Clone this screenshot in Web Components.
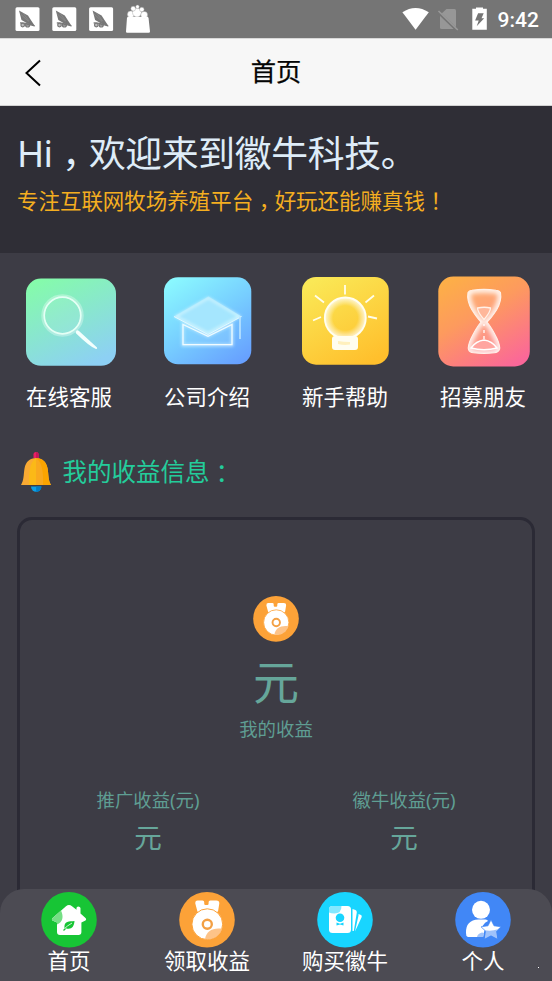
<!DOCTYPE html>
<html lang="zh-CN">
<head>
<meta charset="utf-8">
<title>首页</title>
<style>
html,body{margin:0;height:100%;overflow:hidden;background:#3d3c45;font-family:"Noto Sans","Noto Sans CJK SC",sans-serif}
</style>
</head>
<body>
<farm-app></farm-app>
<script>
const define = (name, html) => {
  const t = document.createElement('template');
  t.innerHTML = html;
  customElements.define(name, class extends HTMLElement {
    constructor() {
      super();
      this.attachShadow({mode: 'open'}).appendChild(t.content.cloneNode(true));
    }
  });
};

define('status-bar', `<style>
:host{display:flex;box-sizing:border-box;height:38px;background:#757575;align-items:stretch;justify-content:space-between;color:#fff}
svg{display:block}
.right{display:flex}
time{font:500 21px/38px Roboto,sans-serif;width:54.500px;padding-top:1px}
</style>
<svg width="170" height="38" viewBox="0 0 170 38">
  <defs><g id="app"><rect x="15.500" y="7.300" width="24" height="23.700" rx="1.500" fill="#fff"/>
    <path d="M19 10.500l9 5 3.200 5 4 6-8-3.200-5.700-3.300z" fill="#777"/>
    <path d="M20.500 14l8 7.500M23 13l6 8" stroke="#999" stroke-width=".5"/>
    <g fill="#bbb" stroke="#777" stroke-width="1.200"><circle cx="22.700" cy="25" r="1.800"/><circle cx="27.600" cy="25" r="2"/><path d="M20 22.800l6 .5 8.500 2.500M25 25h7"/></g></g></defs>
  <use href="#app"/><use href="#app" x="36.800"/><use href="#app" x="73.600"/>
  <g fill="#fff"><path d="M127 17.500h21.500l1.500 14q0 1.300-1.300 1.300h-21.500q-1.300 0-1.200-1.300z"/>
  <g stroke="#999" stroke-width=".4"><circle cx="130.800" cy="14.300" r="3.400"/><circle cx="137" cy="12.500" r="4.500"/><circle cx="144.200" cy="14.800" r="3.400"/><circle cx="133.200" cy="8.700" r="2.400"/><circle cx="137.500" cy="6.800" r="1.800"/><circle cx="141.800" cy="9.500" r="2.300"/></g><path d="M127.500 16.800h20.500v2h-20.500z"/></g>
</svg>
<div class="right"><svg width="96" height="38" viewBox="402 0 96 38">
  <path d="M402.400 12.300Q415.500 3.600 428.800 12.300L415.600 29.800z" fill="#fff"/>
  <path d="M446.500 9h8q1.500 0 1.500 1.500V29h-14.500q-1.500 0-1.500-1.500V15z" fill="#979797"/>
  <path d="M438.500 12.300L457.300 30.500" stroke="#757575" stroke-width="3"/><path d="M438.500 11L457.800 30" stroke="#999" stroke-width="1.600"/>
  <path d="M476 8.800v-1.300h7v1.300h3.800v21h-14.500v-21z" fill="#fff"/>
  <path d="M478.100 13.200h5.600l-2.200 5h2.700l-7.500 8 2-5.700h-3.600z" fill="#757575"/>
</svg><time>9:42</time></div>`);

define('nav-header', `<style>
:host{display:grid;grid-template-columns:60px 1fr 60px;align-items:center;box-sizing:border-box;height:68px;background:#f7f7f7;border-top:1px solid #d8d8d8;border-bottom:1px solid #d2d2d2;color:#050505}
h1{margin:0;font-size:25.3px;font-weight:400;line-height:60px;text-align:center;padding-bottom:2px;-webkit-text-stroke:.25px}
svg{display:block}
</style>
<svg width="60" height="66" viewBox="0 39 60 66"><path d="M40 60.500L26.500 73 40 85.500" fill="none" stroke="#000" stroke-width="2"/></svg>
<h1><slot></slot></h1>`);

define('welcome-banner', `<style>
:host{display:block;box-sizing:border-box;height:147px;padding:22px 17px 0;background:#2f2e36;white-space:nowrap}
.t{height:50px;font-size:36.8px;line-height:50px;color:#deecf8;letter-spacing:-.3px}
.h{letter-spacing:-.7px}
.s{height:30px;font-size:21.47px;line-height:30px;margin-top:8px;color:#f5ae20}
i{font-style:normal;font-family:"Noto Sans CJK TC",sans-serif;position:relative;line-height:0}
.t .c{top:11px}
.s .c{top:6px}
</style>
<div class="t"><span class="h">Hi</span><i class="c" lang="zh-TW">，</i>欢迎来到徽牛科技。</div>
<div class="s">专注互联网牧场养殖平台<i class="c" lang="zh-TW">，</i>好玩还能赚真钱<i lang="zh-TW">！</i></div>`);

define('icon-link', `<style>
:host{display:flex;flex-direction:column;align-items:center;color:#fff}
::slotted(svg){display:block;overflow:visible;width:92px;height:92px}
span{font-size:21.47px;line-height:30px;margin-top:15px;white-space:nowrap}
</style><slot name="icon"></slot><span><slot></slot></span>`);

define('section-title', `<style>
:host{display:flex;height:44px;padding-left:17px;color:#24cc9b;font-size:24.53px;line-height:45px}
svg{display:block;width:45.5px;height:44px}
i{font-style:normal;font-family:"Noto Sans CJK TC",sans-serif;padding-top:1px}
</style>
<svg viewBox="17 449 45.5 44"><path d="M33.5 458v-3.5a2.6 2.6 0 015.2 0V458" fill="#e91e63"/><path d="M36 452a2.6 2.6 0 012.7 2.5V458H36z" fill="#c2185b"/>
<path d="M31 486.500a5.200 5.200 0 0010.400 0z" fill="#0aa0e8"/><path d="M36.100 486.500v5.300a5.200 5.200 0 005.300-5.300z" fill="#027cc4"/>
<path d="M21 485c3-5 2.500-10 3.500-16.500C25.800 461.500 30 458 36 458s10.400 3.500 11.600 10.500C48.700 475 48 480 51 485z" fill="#f9aa33"/>
<path d="M36 458c6 0 10.400 3.500 11.600 10.500C48.700 475 48 480 51 485H36z" fill="#fba400"/>
<path d="M29 485c-.5-13 1-23 7-27v27z" fill="#fbb917"/><path d="M36 485v-27c6 4 7.500 14 7 27z" fill="#f9a91e"/></svg>
<slot></slot><i lang="zh-TW">：</i>`);

define('stat-item', `<style>
:host{display:flex;flex-direction:column;align-items:center;color:#66a69a;white-space:nowrap}
.l{font-size:18.4px;line-height:26px;color:#5f9e93}
.v{font-size:27.6px;line-height:40px;margin-top:4px}
</style><div class="l"><slot></slot></div><div class="v"><slot name="value"></slot></div>`);

define('income-card', `<style>
:host{display:block;box-sizing:border-box;height:420px;margin:24px 17px 0;border:3px solid #2b2a35;border-radius:15px;padding-top:76px;color:#66a69a}
.sum{display:flex;flex-direction:column;align-items:center}
.big{font-size:46px;line-height:60px;margin-top:9px}
.lab{font-size:18.4px;line-height:26px;margin-top:5px;color:#5f9e93}
.row{display:grid;grid-template-columns:1fr 1fr;margin-top:45px}
</style>
<div class="sum"><medal-icon style="--s:46px"></medal-icon><div class="big">元</div><div class="lab">我的收益</div></div>
<div class="row"><stat-item>推广收益(元)<span slot="value">元</span></stat-item><stat-item>徽牛收益(元)<span slot="value">元</span></stat-item></div>`);

define('medal-icon', `<style>:host{display:block;width:var(--s,56px);height:var(--s,56px)}svg{display:block;width:100%;height:100%}</style>
<svg viewBox="179 892 56 56"><circle cx="207" cy="919.800" r="27.800" fill="#fca238"/>
<path d="M197.500 900.500h5q1.700 0 1.700 1.500v1.500q0 1.600 1.300 1.600h1.800q1.300 0 1.300-1.600V902q0-1.500 1.700-1.500h6q3.200 0 3 3l-1.200 7.500q-.5 1.500-2.200 1H199.500q-1.700.5-2.200-1l-2-7.500q-.2-3 2.200-3z" fill="#fff"/>
<circle cx="207.300" cy="924.200" r="15.400" fill="#fff" stroke="#fca238"/>
<path d="M205 939.200c1-8 8-12 17-10.500-2 7-9 11.500-17 10.500z" fill="#fdc388"/>
<circle cx="207.300" cy="924.200" r="4.500" fill="none" stroke="#f3a044" stroke-width="2.400"/></svg>`);

define('tab-item', `<style>
:host{display:flex;flex-direction:column;align-items:center;color:#fff}
::slotted(svg){display:block;width:56px;height:56px}
span{font-size:21.47px;line-height:30px;margin-top:-2px;white-space:nowrap}
</style><slot name="icon"></slot><span><slot></slot></span>`);

define('tab-bar', `<style>
:host{display:grid;grid-template-columns:repeat(4,1fr);box-sizing:border-box;height:92px;padding-top:3px;background:#4c4b53;border-radius:24px 24px 0 0}
</style><slot></slot>`);

define('farm-app', `<style>
:host{display:flex;flex-direction:column;width:552px;height:981px;position:relative;overflow:hidden;background:#3d3c45}
.links{display:grid;grid-template-columns:repeat(4,1fr);padding-top:22px}
section-title{margin-top:37px}
status-bar,nav-header,welcome-banner,.links,section-title,income-card{flex-shrink:0}
tab-bar{position:absolute;left:0;right:0;bottom:0}
.dot{position:absolute;left:538px;top:967px;width:1px;height:1px;background:#fff}
</style>
<status-bar></status-bar>
<nav-header>首页</nav-header>
<welcome-banner></welcome-banner>
<div class="links">
<icon-link><svg slot="icon" viewBox="23 275 92 92">
 <defs><linearGradient id="a" x1=".2" y1="0" x2=".7" y2="1"><stop offset="0" stop-color="#85fbab"/><stop offset="1" stop-color="#8dd0f4"/></linearGradient></defs>
 <rect x="26" y="278.500" width="90" height="87.300" rx="15" fill="url(#a)"/>
 <circle cx="62.500" cy="315.500" r="19.500" fill="none" stroke="#fff" stroke-opacity=".32" stroke-width="3.500"/>
 <circle cx="62.500" cy="315.500" r="18.300" fill="#fff" fill-opacity=".08" stroke="#e4fff5" stroke-width="1.700"/>
 <path d="M76 331.500q1-2 3-.6L97 347.500q.7 1.500-1 1.600-7-3-19.800-15.600-.8-1-.2-2z" fill="#f3fffd"/></svg>在线客服</icon-link>
<icon-link><svg slot="icon" viewBox="161 275 92 92">
 <defs><linearGradient id="b" x1=".15" y1="0" x2=".85" y2="1"><stop offset="0" stop-color="#8af8ff"/><stop offset=".5" stop-color="#77ceff"/><stop offset="1" stop-color="#67a0ff"/></linearGradient>
 <filter id="bf" x="-20%" y="-20%" width="140%" height="140%"><feGaussianBlur stdDeviation="1.400"/></filter></defs>
 <rect x="164" y="277.300" width="87.300" height="87" rx="14" fill="url(#b)"/>
 <path d="M183 324l25 12 24-12v21h-49z" fill="none" stroke="#d9f5ff" stroke-width="3" filter="url(#bf)" opacity=".7"/>
 <path d="M183 324.500l25 11.800 24-11.800v20.200h-49z" fill="#9ad9ff" fill-opacity=".3" stroke="#f2fcff" stroke-width="1.300"/>
 <path d="M208.500 296.500l33 20-33.500 18-34-18z" fill="#a5e6fe"/>
 <path d="M208.500 298l31 18.500-31.500 17-32-17z" fill="none" stroke="#d5f6ff" stroke-width="2" filter="url(#bf)"/>
 <path d="M174 316.500l34 18 33.500-18" fill="none" stroke="#e2f9ff" stroke-width="1"/><path d="M240 317v22" stroke="#b8e2ff" stroke-width="1.700"/></svg>公司介绍</icon-link>
<icon-link><svg slot="icon" viewBox="299 275 92 92">
 <defs><linearGradient id="c" x1=".2" y1="0" x2=".75" y2="1"><stop offset="0" stop-color="#fae856"/><stop offset="1" stop-color="#ffbf2c"/></linearGradient>
 <radialGradient id="cg"><stop offset=".6" stop-color="#fff" stop-opacity="0"/><stop offset="1" stop-color="#fff" stop-opacity=".8"/></radialGradient></defs>
 <rect x="302" y="277" width="86.800" height="87.700" rx="14" fill="url(#c)"/>
 <circle cx="345.300" cy="318" r="20.500" fill="url(#cg)" stroke="#fffef0" stroke-width="1.800"/>
 <rect x="332" y="336" width="26" height="14" rx="3" fill="#fffdf0"/><path d="M338 341q5 1 12 1v2.500q-6 1-12-.5z" fill="#fff0bd"/>
 <g stroke="#fffdeb" stroke-width="1.800"><path d="M345 285v9.500M315 295.500l9 7M374 295.500l-8.500 7M313 320.500l8-3.500M368 316.500l9 2"/></g></svg>新手帮助</icon-link>
<icon-link><svg slot="icon" viewBox="437 275 92 92">
 <defs><linearGradient id="d" x1=".2" y1="0" x2=".8" y2="1"><stop offset="0" stop-color="#fdae48"/><stop offset=".4" stop-color="#fd9a5e"/><stop offset="1" stop-color="#fb6799"/></linearGradient>
 <filter id="df" x="-20%" y="-20%" width="140%" height="140%"><feGaussianBlur stdDeviation="2.500"/></filter>
 <clipPath id="dc"><path d="M468 292.500q1-2 4-2.200 12-1.800 24 0 3.500.4 4.500 2.200 1.500 8-4 17.500-5.500 8.500-9.500 12 5 6 10 16.500 3.500 8 2.500 11-1.500 3-5 3.300-11 1.300-21 0-4-.3-5-3.300-1-3 2.500-11 5-10.500 10-16.500-4-4-9-12-5.500-9.500-4-17.500z"/></clipPath></defs>
 <rect x="438.300" y="276.500" width="91.500" height="90" rx="15" fill="url(#d)"/>
 <g clip-path="url(#dc)"><path d="M468 292.500q1-2 4-2.200 12-1.800 24 0 3.500.4 4.500 2.200 1.500 8-4 17.500-5.500 8.500-9.500 12 5 6 10 16.500 3.500 8 2.500 11-1.500 3-5 3.300-11 1.300-21 0-4-.3-5-3.300-1-3 2.500-11 5-10.500 10-16.500-4-4-9-12-5.500-9.500-4-17.500z" fill="#ffb8a2" fill-opacity=".35" stroke="#fff" stroke-width="5.500" filter="url(#df)"/></g>
 <path d="M468 292.500q1-2 4-2.200 12-1.800 24 0 3.500.4 4.500 2.200 1.500 8-4 17.500-5.500 8.500-9.500 12 5 6 10 16.500 3.500 8 2.500 11-1.500 3-5 3.300-11 1.300-21 0-4-.3-5-3.300-1-3 2.500-11 5-10.500 10-16.500-4-4-9-12-5.500-9.500-4-17.500z" fill="none" stroke="#fff0e8" stroke-width="1.100" stroke-linejoin="round"/>
 <path d="M477.500 308q7-1.500 13 0 0 4-6.500 11.500-6.500-7.500-6.500-11.500z" fill="#ffb79a" stroke="#fff1e8" stroke-width="1.300"/>
 <path d="M484 324v2m0 4v3m0 3v3" stroke="#fff" stroke-width="1.300"/><path d="M471 348q5-7 13-8 8 1 13 8-13 3.500-26 0z" fill="#ffa5a0" stroke="#fff" stroke-width="1.300"/></svg>招募朋友</icon-link>
</div>
<section-title>我的收益信息</section-title>
<income-card></income-card>
<tab-bar>
<tab-item><svg slot="icon" viewBox="41 892 56 56"><circle cx="69" cy="919.800" r="27.800" fill="#17c535"/>
 <path d="M69 905q1.500 0 3 1.300l4.500 3.400V908q0-1.500 1.800-1.500t2.200 1.500v5.500l5 4.500q1.500 1.700-.5 2.800l-3.600 1.700V932q0 3-3 3H60q-3 0-3-3v-9.500l-4-1.700q-2-1-.4-2.800L66 906.300q1.500-1.300 3-1.300z" fill="#fff"/>
 <path d="M61 910.500q4.500 10-4 14v-2l-4-1.700q-2-1-.4-2.800z" fill="#75df85"/>
 <path d="M64.500 928c-1-7 5-6.500 10-7-.5 6-3 9-9 7.200z" fill="#17c535"/><path d="M63.500 929.500q4-4 8.500-6.500" fill="none" stroke="#fff" stroke-width=".8"/><path d="M63.500 930.500l2-2" stroke="#17c535" stroke-width="1.300"/></svg>首页</tab-item>
<tab-item><medal-icon slot="icon"></medal-icon>领取收益</tab-item>
<tab-item><svg slot="icon" viewBox="317 892 56 56"><circle cx="345" cy="919.800" r="27.800" fill="#18d5ff"/>
 <rect x="329" y="906" width="22" height="27" rx="3.500" fill="#fff"/><path d="M329 912.500V909q0-3 3-3h9.500q0 7.500-7 7.500-3.500 0-5.500-1z" fill="#84e8ff"/>
 <path d="M352.500 909l3 1q1.500.7 1.300 2.500l-3 18.500h-1.300zM358.500 914l2.500 1q1 .5.700 2L355 931.500l3.500-16z" fill="#fff"/>
 <circle cx="340" cy="917.700" r="4.300" fill="#18d5ff"/><path d="M336.500 922.500l3.500 1.300 3.500-1.300v3l-3.500-1-3.500 1z" fill="#18d5ff"/></svg>购买徽牛</tab-item>
<tab-item><svg slot="icon" viewBox="455 892 56 56"><circle cx="483" cy="919.800" r="27.800" fill="#4187f6"/>
 <circle cx="481" cy="909.800" r="9" fill="#fff"/><path d="M466 933q-.5-13 12.500-13.500h7q2 0 2.500 1.500-3 1-5.500 5l2 4-1.500 7h-15q-2.300-1-2-4z" fill="#fff"/>
 <path d="M477 937q.5-3.500 5-4.500l2 .5-.8 4z" fill="#a0c3fb"/>
 <path d="M491 919.800l3 6 7 1-5 4.700 1.200 7-6.200-3.300-6.200 3.300 1.200-7-5-4.700 7-1z" fill="#fff" stroke="#4187f6" stroke-width=".7"/><path d="M483.500 929.800q7 2 14.500-.5l-2 2.200 1.200 7-6.200-3.300-6.200 3.300 1.200-7z" fill="#9fc2fb"/></svg>个人</tab-item>
</tab-bar>
<div class="dot"></div>`);
</script>
</body>
</html>
